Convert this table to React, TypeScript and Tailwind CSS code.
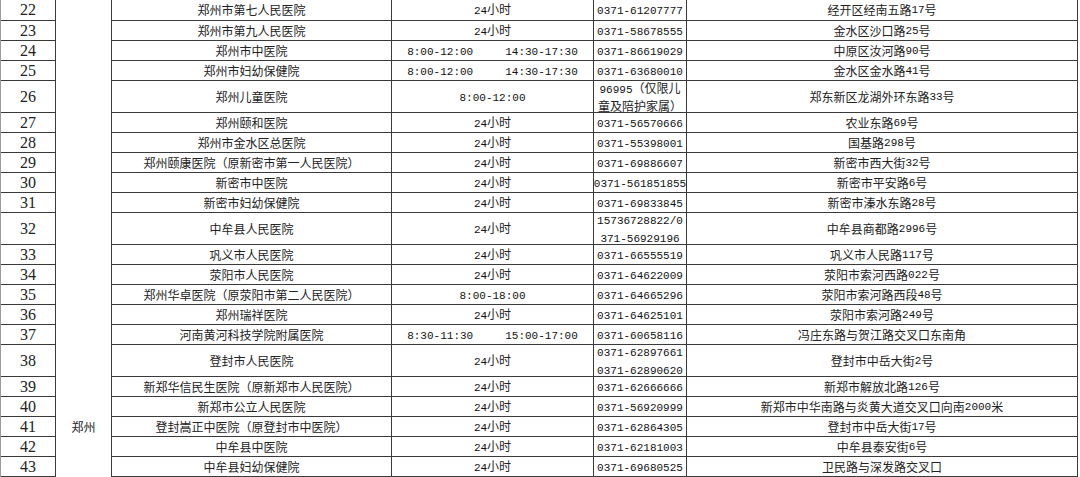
type Row = {
  n: number
  name: string
  time: string[]
  phone: string[]
  addr: string
  tall?: boolean
}

const AM_PM = ['8:00-12:00', '14:30-17:30']

const ROWS: Row[] = [
  { n: 22, name: '郑州市第七人民医院', time: ['24小时'], phone: ['0371-61207777'], addr: '经开区经南五路17号' },
  { n: 23, name: '郑州市第九人民医院', time: ['24小时'], phone: ['0371-58678555'], addr: '金水区沙口路25号' },
  { n: 24, name: '郑州市中医院', time: AM_PM, phone: ['0371-86619029'], addr: '中原区汝河路90号' },
  { n: 25, name: '郑州市妇幼保健院', time: AM_PM, phone: ['0371-63680010'], addr: '金水区金水路41号' },
  {
    n: 26,
    name: '郑州儿童医院',
    time: ['8:00-12:00'],
    phone: ['96995（仅限儿', '童及陪护家属）'],
    addr: '郑东新区龙湖外环东路33号',
    tall: true,
  },
  { n: 27, name: '郑州颐和医院', time: ['24小时'], phone: ['0371-56570666'], addr: '农业东路69号' },
  { n: 28, name: '郑州市金水区总医院', time: ['24小时'], phone: ['0371-55398001'], addr: '国基路298号' },
  { n: 29, name: '郑州颐康医院（原新密市第一人民医院）', time: ['24小时'], phone: ['0371-69886607'], addr: '新密市西大街32号' },
  { n: 30, name: '新密市中医院', time: ['24小时'], phone: ['0371-561851855'], addr: '新密市平安路6号' },
  { n: 31, name: '新密市妇幼保健院', time: ['24小时'], phone: ['0371-69833845'], addr: '新密市溱水东路28号' },
  {
    n: 32,
    name: '中牟县人民医院',
    time: ['24小时'],
    phone: ['15736728822/0', '371-56929196'],
    addr: '中牟县商都路2996号',
    tall: true,
  },
  { n: 33, name: '巩义市人民医院', time: ['24小时'], phone: ['0371-66555519'], addr: '巩义市人民路117号' },
  { n: 34, name: '荥阳市人民医院', time: ['24小时'], phone: ['0371-64622009'], addr: '荥阳市索河西路022号' },
  { n: 35, name: '郑州华卓医院（原荥阳市第二人民医院）', time: ['8:00-18:00'], phone: ['0371-64665296'], addr: '荥阳市索河路西段48号' },
  { n: 36, name: '郑州瑞祥医院', time: ['24小时'], phone: ['0371-64625101'], addr: '荥阳市索河路249号' },
  {
    n: 37,
    name: '河南黄河科技学院附属医院',
    time: ['8:30-11:30', '15:00-17:00'],
    phone: ['0371-60658116'],
    addr: '冯庄东路与贺江路交叉口东南角',
  },
  {
    n: 38,
    name: '登封市人民医院',
    time: ['24小时'],
    phone: ['0371-62897661', '0371-62890620'],
    addr: '登封市中岳大街2号',
    tall: true,
  },
  { n: 39, name: '新郑华信民生医院（原新郑市人民医院）', time: ['24小时'], phone: ['0371-62666666'], addr: '新郑市解放北路126号' },
  { n: 40, name: '新郑市公立人民医院', time: ['24小时'], phone: ['0371-56920999'], addr: '新郑市中华南路与炎黄大道交叉口向南2000米' },
  { n: 41, name: '登封嵩正中医院（原登封市中医院）', time: ['24小时'], phone: ['0371-62864305'], addr: '登封市中岳大街17号' },
  { n: 42, name: '中牟县中医院', time: ['24小时'], phone: ['0371-62181003'], addr: '中牟县泰安街6号' },
  { n: 43, name: '中牟县妇幼保健院', time: ['24小时'], phone: ['0371-69680525'], addr: '卫民路与深发路交叉口' },
]

// 先頭行は上端が少し切れているので1px高く
function rowHeight(i: number, tall?: boolean) {
  if (tall) return 'h-[32px]'
  if (i === 0) return 'h-[21px]'
  return 'h-[20px]'
}

// 半角部分だけ細い等幅フォントにする（宋体っぽく見せる）
function Mixed({ text }: { text: string }) {
  const parts = text.split(/([ -~]+)/).filter(Boolean)
  return (
    <>
      {parts.map((p, i) =>
        /^[ -~]+$/.test(p) ? (
          <span key={i} className="font-['Liberation_Mono',monospace] text-[11px] text-[#111]">
            {p}
          </span>
        ) : (
          <span key={i}>{p}</span>
        ),
      )}
    </>
  )
}

export default function App() {
  return (
    <div className="w-[1080px] h-[477px] overflow-hidden bg-white text-[12px] text-[#222] font-['Noto_Sans_CJK_SC',sans-serif]">
      <div className="flex w-[1078px] border-l border-r border-l-[#9a9a9a] border-r-[#3a3a3a]">
        {/* 番号 */}
        <div className="flex w-[55px] shrink-0 flex-col border-r border-[#3a3a3a]">
          {ROWS.map((r, i) => (
            <div
              key={r.n}
              className={`${rowHeight(i, r.tall)} flex items-center justify-center border-b border-[#3a3a3a] font-['Liberation_Serif',serif] text-[16px] leading-none`}
            >
              {r.n}
            </div>
          ))}
        </div>

        {/* 市（結合セル） */}
        <div className="flex w-[56px] shrink-0 flex-col items-center justify-end border-r border-[#3a3a3a] pb-[42px]">
          <span className="leading-[16px]">郑州</span>
        </div>

        {/* 明細 */}
        <div className="flex flex-1 flex-col">
          {ROWS.map((r, i) => (
            <div key={r.n} className={`${rowHeight(i, r.tall)} flex border-b border-[#3a3a3a] leading-[16px]`}>
              <div className="flex w-[280px] shrink-0 items-center justify-center whitespace-nowrap border-r border-[#3a3a3a]">
                {r.name}
              </div>
              <div className="flex w-[202px] shrink-0 items-center justify-center gap-[32px] whitespace-nowrap border-r border-[#3a3a3a]">
                {r.time.map((t) => (
                  <span key={t}>
                    <Mixed text={t} />
                  </span>
                ))}
              </div>
              <div className="flex w-[93px] shrink-0 flex-col items-center justify-center whitespace-nowrap border-r border-[#3a3a3a]">
                {r.phone.map((p) => (
                  <span key={p}>
                    <Mixed text={p} />
                  </span>
                ))}
              </div>
              <div className="flex flex-1 items-center justify-center whitespace-nowrap">
                <Mixed text={r.addr} />
              </div>
            </div>
          ))}
        </div>
      </div>
    </div>
  )
}
